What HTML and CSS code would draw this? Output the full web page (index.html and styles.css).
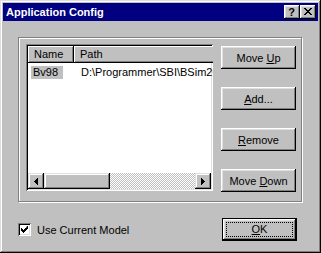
FILE: index.html
```html
<!doctype html>
<html lang=en >
<head>
<meta charset=utf-8 >
<title>Application Config</title>
<link rel="stylesheet" href="styles.css">
</head>
<body>

	<div class=window >

		<div class=titlebar >
			<span class=title >Application Config</span>
			<div class=capButtons >
				<div class="capBtn help" >?</div>
				<div class="capBtn close" >
					<svg width=8 height=7 viewBox="0 0 8 7" ><path d="M0 0h2v1h1v1h2v-1h1v-1h2v1h-1v1h-1v1h-1v1h1v1h1v1h1v1h-2v-1h-1v-1h-2v1h-1v1h-2v-1h1v-1h1v-1h1v-1h-1v-1h-1v-1h-1z" fill="#000" /></svg>
				</div>
			</div>
		</div>

		<div class=client >

			<div class=group >

				<div class=listview >
					<div class=lvHeader >
						<div class="hd colName" >Name</div>
						<div class="hd colPath" >Path</div>
					</div>
					<div class=lvRows >
						<div class=lvRow >
							<div class="cell colName" ><span class=sel >Bv98</span></div>
							<div class="cell colPath" >D:\Programmer\SBI\BSim2000</div>
						</div>
					</div>
					<div class=hscroll >
						<div class=sbBtn ><svg width=4 height=7 viewBox="0 0 4 7" ><path d="M3 0h1v7h-1zM2 1h1v5h-1zM1 2h1v3h-1zM0 3h1v1h-1z" fill="#000" /></svg></div>
						<div class="sbBtn thumb" ></div>
						<div class=track ></div>
						<div class=sbBtn ><svg width=4 height=7 viewBox="0 0 4 7" ><path d="M0 0h1v7h-1zM1 1h1v5h-1zM2 2h1v3h-1zM3 3h1v1h-1z" fill="#000" /></svg></div>
					</div>
				</div>

				<div class=btnCol >
					<button class=btn >Move <u>U</u>p</button>
					<button class=btn ><u>A</u>dd...</button>
					<button class=btn ><u>R</u>emove</button>
					<button class=btn >Move <u>D</u>own</button>
				</div>

			</div>

			<div class=bottomRow >
				<label class=check >
					<span class=checkBox ><svg width=7 height=7 viewBox="0 0 7 7" ><path d="M6 0h1v3h-1v1h-1v1h-1v1h-1v1h-1v-1h-1v-1h-1v-3h1v1h1v1h1v-1h1v-1h1z" fill="#000" /></svg></span>
					Use Current Model
				</label>
				<button class="btn default" ><span class=focus ><u>O</u>K</span></button>
			</div>

		</div>

	</div>

</body>
</html>
```

FILE: styles.css
```css
html, body { margin: 0; background: #c0c0c0; }
body { font: 11px "Liberation Sans", Arial, sans-serif; color: #000; }

.window { background: #c0c0c0; box-shadow: inset -1px -1px #000, inset 1px 1px #dfdfdf, inset -2px -2px #808080, inset 2px 2px #fff; box-sizing: border-box; height: 253px; padding: 3px; width: 321px; }

.titlebar { align-items: center; background: #000080; display: flex; height: 18px; justify-content: space-between; }
.title { color: #fff; font-weight: bold; padding-left: 3px; }
.capButtons { display: flex; padding-right: 2px; }

.capBtn { align-items: center; background: #c0c0c0; box-shadow: inset -1px -1px #000, inset 1px 1px #fff, inset -2px -2px #808080, inset 2px 2px #dfdfdf; box-sizing: border-box; display: flex; font-weight: bold; height: 14px; justify-content: center; line-height: 14px; width: 16px; }
.capBtn.help { font-size: 11px; padding: 0 1px 1px 0; }
.capBtn.close svg { margin: 0 1px 1px 0; }

.client { padding: 16px 0 0 15px; }

.group { border: 1px solid #808080; box-shadow: inset 1px 1px #fff, 1px 1px #fff; box-sizing: border-box; display: flex; gap: 8px; height: 165px; padding: 6px 4px 0 7px; width: 284px; }

.listview { background: #fff; box-shadow: inset 1px 1px #808080, inset -1px -1px #fff, inset 2px 2px #000, inset -2px -2px #dfdfdf; box-sizing: border-box; display: flex; flex-direction: column; height: 147px; overflow: hidden; padding: 2px; width: 187px; }

.lvHeader { display: flex; height: 17px; }
.hd { background: #c0c0c0; box-shadow: inset -1px -1px #000, inset 1px 1px #fff, inset -2px -2px #808080; box-sizing: border-box; flex-shrink: 0; line-height: 17px; padding-left: 6px; }
.hd.colName { width: 46px; }
.hd.colPath { width: 160px; }

.lvRows { flex: 1; padding-top: 3px; }
.lvRow { display: flex; height: 13px; line-height: 13px; white-space: nowrap; }
.cell { flex-shrink: 0; }
.cell.colName { padding-left: 3px; width: 43px; }
.cell.colPath { padding-left: 7px; }
.sel { background: #c0c0c0; display: inline-block; padding: 0 5px 0 2px; }

.hscroll { display: flex; height: 16px; }
.sbBtn { align-items: center; background: #c0c0c0; box-shadow: inset -1px -1px #000, inset 1px 1px #dfdfdf, inset -2px -2px #808080, inset 2px 2px #fff; display: flex; flex-shrink: 0; height: 16px; justify-content: center; width: 16px; }
.sbBtn.thumb { width: 66px; }
.track { background: repeating-conic-gradient(#fff 0 25%, #c0c0c0 0 50%) 0 0 / 2px 2px; flex: 1; }

.btnCol { display: flex; flex-direction: column; gap: 18px; padding-top: 2px; }

.btn { background: #c0c0c0; border: 0; box-shadow: inset -1px -1px #000, inset 1px 1px #fff, inset -2px -2px #808080, inset 2px 2px #dfdfdf; color: #000; font: 11px "Liberation Sans", Arial, sans-serif; height: 23px; padding: 0; width: 75px; }
.btn.default { border: 1px solid #000; display: flex; padding: 3px; }
.focus { border: 1px dotted #000; flex: 1; line-height: 13px; }

.bottomRow { align-items: center; display: flex; justify-content: space-between; margin-top: 16px; padding-right: 5px; width: 279px; }

.check { align-items: center; display: flex; gap: 6px; }
.checkBox { align-items: center; background: #fff; box-shadow: inset 1px 1px #808080, inset -1px -1px #fff, inset 2px 2px #000, inset -2px -2px #dfdfdf; display: flex; height: 13px; justify-content: center; width: 13px; }
```
